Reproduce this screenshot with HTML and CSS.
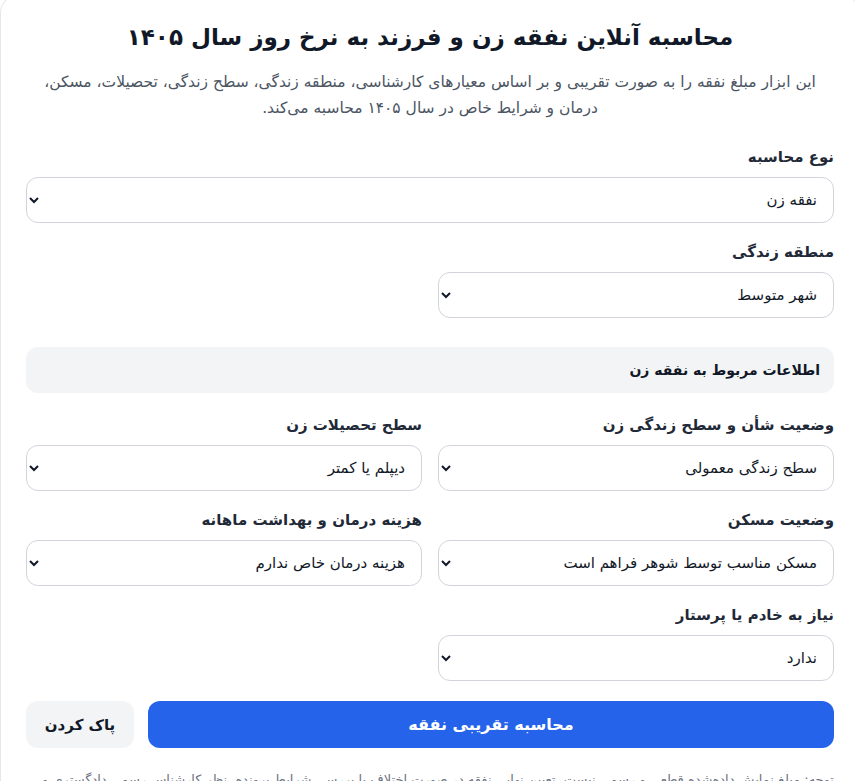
FILE: index.html
```html
<!DOCTYPE html>
<html lang="fa">
  <head>
    <meta charset="UTF-8" />
    <meta name="viewport" content="width=device-width, initial-scale=1.0" />
    <title>محاسبه نفقه</title>
    <link rel="stylesheet" href="styles.css">
  </head>
  <body>
    <div class="card" dir="rtl">
      <h1 class="title">محاسبه آنلاین نفقه زن و فرزند به نرخ روز سال ۱۴۰۵</h1>
      <p class="desc">
        این ابزار مبلغ نفقه را به صورت تقریبی و بر اساس معیارهای کارشناسی، منطقه زندگی، سطح زندگی، تحصیلات، مسکن، درمان و شرایط خاص در سال ۱۴۰۵ محاسبه می‌کند.
      </p>

      <div class="grid">
        <div class="field full">
          <label class="label">نوع محاسبه</label>
          <select class="select">
            <option>نفقه زن</option>
            <option>نفقه فرزند</option>
          </select>
        </div>
        <div class="field">
          <label class="label">منطقه زندگی</label>
          <select class="select">
            <option>شهر متوسط</option>
            <option>کلان شهر</option>
          </select>
        </div>
      </div>

      <div class="section-head">اطلاعات مربوط به نفقه زن</div>

      <div class="grid">
        <div class="field">
          <label class="label">وضعیت شأن و سطح زندگی زن</label>
          <select class="select">
            <option>سطح زندگی معمولی</option>
          </select>
        </div>
        <div class="field">
          <label class="label">سطح تحصیلات زن</label>
          <select class="select">
            <option>دیپلم یا کمتر</option>
          </select>
        </div>
        <div class="field">
          <label class="label">وضعیت مسکن</label>
          <select class="select">
            <option>مسکن مناسب توسط شوهر فراهم است</option>
          </select>
        </div>
        <div class="field">
          <label class="label">هزینه درمان و بهداشت ماهانه</label>
          <select class="select">
            <option>هزینه درمان خاص ندارم</option>
          </select>
        </div>
        <div class="field">
          <label class="label">نیاز به خادم یا پرستار</label>
          <select class="select">
            <option>ندارد</option>
          </select>
        </div>
      </div>

      <div class="actions">
        <button class="btn btn-primary">محاسبه تقریبی نفقه</button>
        <button class="btn btn-light">پاک کردن</button>
      </div>

      <p class="note">
        توجه: مبلغ نمایش داده‌شده قطعی و رسمی نیست. تعیین نهایی نفقه در صورت اختلاف یا بررسی شرایط پرونده، نظر کارشناس رسمی دادگستری و رأی دادگاه است.
      </p>
    </div>
  </body>
</html>
```

FILE: styles.css
```css
* {
  margin: 0;
  padding: 0;
  box-sizing: border-box;
}

body {
  font-family: "DejaVu Sans", sans-serif;
  background-color: #fff;
  color: #1f2937;
  overflow: hidden;
}

.card {
  width: 860px;
  margin-top: -4px;
  padding: 22px 25px 24px;
  border: 1px solid #e5e7eb;
  border-radius: 16px;
  background-color: #fff;
}

.title {
  font-size: 23px;
  font-weight: 700;
  text-align: center;
  color: #111827;
  line-height: 36px;
}

.desc {
  margin-top: 14px;
  padding: 0 10px;
  font-size: 15.5px;
  line-height: 26px;
  color: #4b5563;
  text-align: center;
}

.grid {
  display: grid;
  grid-template-columns: 1fr 1fr;
  column-gap: 16px;
  row-gap: 17px;
  margin-top: 24px;
}

.field.full {
  grid-column: 1 / -1;
}

.label {
  display: block;
  font-size: 15px;
  font-weight: 600;
  line-height: 24px;
  margin-bottom: 8px;
  color: #1f2937;
}

.select {
  width: 100%;
  height: 46px;
  padding: 0 12px;
  font-family: inherit;
  font-size: 15px;
  color: #111827;
  background-color: #fff;
  border: 1px solid #d1d5db;
  border-radius: 12px;
}

.section-head {
  margin-top: 29px;
  height: 46px;
  line-height: 46px;
  padding: 0 14px;
  background-color: #f3f4f6;
  border-radius: 12px;
  font-size: 14px;
  font-weight: 700;
  color: #111827;
}

.section-head + .grid {
  margin-top: 20px;
}

.actions {
  display: flex;
  gap: 14px;
  margin-top: 20px;
}

.btn {
  height: 47px;
  border: none;
  border-radius: 12px;
  font-family: inherit;
  font-size: 15px;
  font-weight: 700;
  cursor: pointer;
}

.btn-primary {
  flex: 1;
  font-size: 16px;
  background-color: #2563eb;
  color: #fff;
}

.btn-light {
  width: 108px;
  background-color: #f3f4f6;
  color: #111827;
}

.note {
  margin-top: 20px;
  font-size: 13px;
  line-height: 24px;
  color: #6b7280;
}
```
